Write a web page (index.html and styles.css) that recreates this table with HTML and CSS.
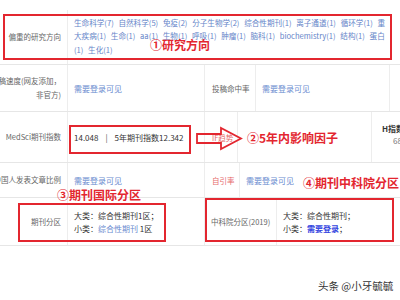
FILE: index.html
```html
<!DOCTYPE html>
<html lang="zh-CN">
<head>
<meta charset="utf-8">
<title>期刊信息</title>
<link rel="stylesheet" href="styles.css">
</head>
<body>
<div class="page">
  <div class="table">
    <div class="row r1">
      <div class="lab"><span>偏重的研究方向</span></div>
      <div class="val tags">
        <span class="tag">生命科学(7)</span> <span class="tag">自然科学(5)</span> <span class="tag">免疫(2)</span> <span class="tag">分子生物学(2)</span> <span class="tag">综合性期刊(1)</span> <span class="tag">离子通道(1)</span> <span class="tag">循环学(1)</span> <span class="tag">重大疾病(1)</span> <span class="tag">生命(1)</span> <span class="tag">aa(1)</span> <span class="tag">生物(1)</span> <span class="tag">呼吸(1)</span> <span class="tag">肿瘤(1)</span> <span class="tag">脑科(1)</span> <span class="tag">biochemistry(1)</span> <span class="tag">结构(1)</span> <span class="tag">蛋白(1)</span> <span class="tag">生化(1)</span>
      </div>
    </div>
    <div class="row r2">
      <div class="lab"><span>审稿速度(网友添加，<br>非官方)</span></div>
      <div class="val w137"><span class="link">需要登录可见</span></div>
      <div class="lab2 w51"><span>投稿命中率</span></div>
      <div class="val w134"><span class="link">需要登录可见</span></div>
      <div class="val rest"></div>
    </div>
    <div class="row r3">
      <div class="lab"><span>MedSci期刊指数</span></div>
      <div class="val w137"><span class="num">14.048<span class="sep">|</span>5年期刊指数12.342</span></div>
      <div class="lab2 w33"><span class="pink">IF趋势</span></div>
      <div class="val w134"></div>
      <div class="hcell"><b>H指数</b><span class="hnum">68</span></div>
    </div>
    <div class="row r4">
      <div class="lab"><span>中国人发表文章比例</span></div>
      <div class="val w137"><span class="link">需要登录可见</span></div>
      <div class="lab2 w35"><span class="pink">自引率</span></div>
      <div class="val rest"><span class="link">需要登录可见</span></div>
    </div>
    <div class="row r5">
      <div class="lab"><span>期刊分区</span></div>
      <div class="val w137 lines"><span>大类：综合性期刊1区；</span><span>小类：<span class="link">综合性期刊</span> 1区</span></div>
      <div class="lab2 w72"><span>中科院分区(2019)</span></div>
      <div class="val rest lines"><span>大类：综合性期刊；</span><span>小类：<span class="strong-link">需要登录</span>；</span></div>
    </div>
  </div>

  <div class="box box1"></div>
  <div class="box box2"></div>
  <div class="box box3"></div>
  <div class="box box4"></div>
  <svg class="arrow" width="50" height="26" viewBox="0 0 50 26"><polygon points="2,8 26,8 26,2 46,12.5 26,23 26,17 2,17" fill="none" stroke="#e3262f" stroke-width="1.8" stroke-linejoin="miter"/></svg>
  <div class="ann ann1">①研究方向</div>
  <div class="ann ann2">②5年内影响因子</div>
  <div class="ann ann3">③期刊国际分区</div>
  <div class="ann ann4">④期刊中科院分区</div>
  <div class="mark">头条 @小牙毓毓</div>
</div>
</body>
</html>
```
FILE: styles.css
```css
html, body {
  margin: 0;
  padding: 0;
  background: #fff;
}
.page {
  position: relative;
  width: 400px;
  height: 300px;
  overflow: hidden;
  background: #fff;
  font-family: "Noto Sans CJK SC", "Noto Sans", sans-serif;
  color: #333;
}
.table {
  width: 440px;
  padding-top: 10px;
}
.row {
  display: flex;
  box-sizing: border-box;
  border-bottom: 1px solid #e6e6e6;
}
.row > div {
  box-sizing: border-box;
  display: flex;
  align-items: center;
  border-right: 1px solid #ededed;
  flex: none;
}
.r1 { height: 55px; }
.r2 { height: 47px; }
.r3 { height: 51px; }
.r4 { height: 35px; }
.r5 { height: 48px; }

.lab {
  width: 68px;
  justify-content: flex-end;
  padding-right: 6px;
  font-size: 7.5px;
  line-height: 14px;
  color: #666;
}
.lab > span {
  white-space: nowrap;
  text-align: right;
}
.lab2 {
  padding-left: 7px;
  font-size: 7.5px;
  color: #666;
  white-space: nowrap;
}
.val {
  padding-left: 6px;
  font-size: 8px;
  line-height: 13px;
  white-space: nowrap;
}
.w137 { width: 137px; }
.w134 { width: 134px; }
.w51 { width: 51px; }
.w33 { width: 33px; }
.w35 { width: 35px; }
.w72 { width: 72px; padding-left: 6px; }
.rest { flex: 1 1 auto !important; border-right: none !important; }

.r1 .tags {
  display: block;
  width: 320px;
  padding: 6px 0 0 6px;
  font-size: 7.6px;
  line-height: 13.4px;
  white-space: normal;
  border-right: none;
  color: #6585c9;
}
.tag { margin-right: 3px; }

.link { color: #6a8bcf; }
.strong-link { color: #3344e0; font-weight: 700; }
.pink { color: #e66a6a; }
.num { color: #333; }
.sep { margin: 0 7px; color: #555; }

.r5 .lines {
  flex-direction: column;
  align-items: flex-start;
  justify-content: center;
  color: #333;
}
.r5 .rest.lines { padding-top: 1px; }

.hcell {
  flex-direction: column;
  align-items: flex-start !important;
  justify-content: center;
  padding-left: 10px;
  padding-bottom: 4px;
  border-right: none !important;
  font-size: 8px;
  line-height: 12px;
}
.hcell b { color: #333; }
.hnum { color: #777; margin-left: 11px; }

.box {
  position: absolute;
  box-sizing: border-box;
  border: 2px solid #e3262f;
}
.box1 { left: 3px; top: 14px; width: 389px; height: 46px; }
.box2 { left: 69px; top: 125px; width: 122px; height: 29px; }
.box3 { left: 18px; top: 203px; width: 148px; height: 39px; }
.box4 { left: 205px; top: 198px; width: 189px; height: 44px; }

.arrow {
  position: absolute;
  left: 195px;
  top: 126px;
}
.ann {
  position: absolute;
  color: #e3262f;
  font-weight: 700;
  font-size: 12px;
  line-height: 14px;
  white-space: nowrap;
}
.ann1 { left: 150px; top: 38px; }
.ann2 { left: 247px; top: 131px; }
.ann3 { left: 57px; top: 188px; }
.ann4 { left: 303px; top: 176px; }

.mark {
  position: absolute;
  left: 318px;
  top: 279px;
  font-size: 10.5px;
  line-height: 14px;
  color: #333;
  white-space: nowrap;
}
```
